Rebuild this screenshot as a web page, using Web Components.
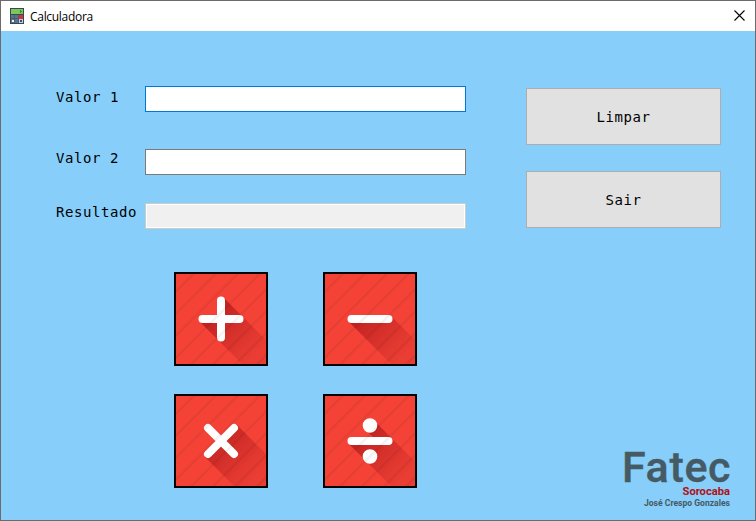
<!DOCTYPE html>
<html lang="pt-BR">
<head>
<meta charset="utf-8">
<title>Calculadora</title>
<style>
html,body{margin:0;height:100%;overflow:hidden}
</style>
</head>
<body>
<calc-window caption="Calculadora">
  <calc-fields>
    <calc-field label="Valor 1" state="focus" style="--h:63px;--shift:-2px"></calc-field>
    <calc-field label="Valor 2" style="--h:54px;--shift:-4px"></calc-field>
    <calc-field label="Resultado" state="readonly" style="--h:26px;--shift:-4px"></calc-field>
  </calc-fields>
  <calc-pad>
    <op-tile op="plus"></op-tile>
    <op-tile op="minus"></op-tile>
    <op-tile op="times"></op-tile>
    <op-tile op="divide"></op-tile>
  </calc-pad>
  <push-button slot="side">Limpar</push-button>
  <push-button slot="side">Sair</push-button>
  <fatec-logo slot="side"></fatec-logo>
</calc-window>
<script>
function define(name, render) {
  customElements.define(name, class extends HTMLElement {
    constructor() {
      super();
      this.attachShadow({ mode: 'open' });
    }
    connectedCallback() {
      this.shadowRoot.innerHTML = render(this);
    }
  });
}

define('calc-window', el => `
<style>
:host{display:flex;flex-direction:column;box-sizing:border-box;width:756px;height:521px;border:1px solid #6b6b6b;background:#87cefa;color:#000;font:14px "DejaVu Sans Mono",monospace;letter-spacing:.57px}
header{display:flex;align-items:center;box-sizing:border-box;height:30px;background:#fff;padding:0 10px 0 9px;font:12px "Open Sans","Noto Sans",sans-serif}
header span{margin:0 0 0 6px;flex:1;letter-spacing:-.3px}
header svg:first-child{margin-top:-1px}
header svg:last-child{margin-top:-1px}
svg{display:block}
main{flex:1;display:flex;min-height:0}
.left{width:525px;box-sizing:border-box;padding:55px 0 0 55px}
.side{flex:1;display:flex;flex-direction:column;gap:26px;padding:57px 34px 9px 0}
</style>
<header>
  <svg width="14" height="16" viewBox="0 0 14 16" shape-rendering="crispEdges">
    <rect width="14" height="16" fill="#2f4a58"/>
    <rect x="1" y="1" width="12" height="5" fill="#7dc855"/>
    <path d="M10 2h1v1h1v1h-1v1h-1" fill="#3f8a3a"/>
    <path d="M1 7h12v8H1z" fill="#5b7385"/>
    <path d="M4 7h1v8H4zM8 7h1v8H8zM1 10h8v1H1z" fill="#465e6f"/>
    <rect x="9" y="7" width="4" height="4" fill="#e02a40"/>
    <path d="M2 12h2v2H2z" fill="#eef3f5"/>
    <path d="M9 11h4v4H9z" fill="#b9d3e6"/><path d="M10 12h2v2h-2z" fill="#3b5263"/>
  </svg>
  <span>${el.getAttribute('caption')}</span>
  <svg width="11" height="11" viewBox="0 0 11 11"><path d="M.5 .5l10 10M10.500 .5l-10 10" stroke="#000" stroke-width="1.1"/></svg>
</header>
<main><div class="left"><slot></slot></div><div class="side"><slot name="side"></slot></div></main>`);

define('calc-fields', () => `
<style>:host{display:flex;flex-direction:column;height:143px}</style><slot></slot>`);

define('calc-field', el => `
<style>
:host{display:grid;grid-template-columns:89px 321px;height:var(--h);align-items:start}
label{line-height:26px;margin-top:var(--shift);white-space:pre}
div{box-sizing:border-box;height:26px;background:#fff;border:1px solid #7a7a7a}
:host([state=focus]) div{border-color:#0078d7}
:host([state=readonly]) div{border-color:#ccc;background:#f0f0f0;box-shadow:inset 0 0 0 1px #fff}
</style>
<label>${el.getAttribute('label')}</label><div></div>`);

define('calc-pad', () => `
<style>:host{display:grid;grid-template-columns:94px 94px;gap:28px 55px;margin:43px 0 0 118px}</style><slot></slot>`);

const ops = {
  plus: {
    shade: 'M24 48L45 45L48 24L90 66V90H66Z',
    glyph: '<path d="M26.500 45h37M45 26.500v37"/>'
  },
  minus: {
    shade: 'M24 48L26 45L66 42L90 66V90H66Z',
    glyph: '<path d="M26.500 45h37"/>'
  },
  times: {
    shade: 'M29 61L61 29L90 58V90H58Z',
    glyph: '<path d="M32 32l26 26M58 32l-26 26"/>'
  },
  divide: {
    shade: 'M41 34L49.500 25L90 65.500V90H66L24 48L26 45H52Z',
    glyph: '<path d="M26.500 45h37"/><circle cx="45" cy="29.500" r="3.300"/><circle cx="45" cy="60.500" r="3.300"/>'
  }
};
define('op-tile', el => {
  const o = ops[el.getAttribute('op')];
  let lines = '';
  for (let s = 17.5; s < 180; s += 22) lines += `M${s + 4} -4L-4 ${s + 4}`;
  return `
<style>:host{display:block;box-sizing:border-box;width:94px;height:94px;border:2px solid #000}svg{display:block}</style>
<svg width="90" height="90" viewBox="0 0 90 90">
  <defs><linearGradient id="g" gradientUnits="userSpaceOnUse" x1="36" y1="36" x2="80" y2="80">
    <stop offset="0" stop-color="#b71c1c" stop-opacity=".9"/><stop offset="1" stop-color="#c62828" stop-opacity=".22"/>
  </linearGradient></defs>
  <rect width="90" height="90" fill="#f44336"/>
  <path d="${o.shade}" fill="url(#g)"/>
  <g fill="#fff" stroke="#fff" stroke-width="8" stroke-linecap="round">${o.glyph}</g>
  <path d="${lines}" fill="none" stroke="#000" stroke-opacity=".05" stroke-width="2.6"/>
</svg>`;
});

define('push-button', () => `
<style>:host{display:flex;align-items:center;justify-content:center;box-sizing:border-box;height:57px;padding-top:1px;background:#e1e1e1;border:1px solid #adadad}</style><slot></slot>`);

define('fatec-logo', () => `
<style>
:host{display:flex;justify-content:flex-end;margin:auto -12px 0 0}
svg{display:block;overflow:visible}
text{font-family:Roboto,sans-serif;letter-spacing:0}
</style>
<svg width="114" height="72" viewBox="619 440 114 72">
  <text x="622" y="483" font-size="43" font-weight="500" fill="#455a64" stroke="#455a64" stroke-width=".4" textLength="108.500" lengthAdjust="spacing">Fatec</text>
  <text x="682.500" y="496" font-size="10.500" font-weight="700" fill="#b01116" textLength="47.500" lengthAdjust="spacingAndGlyphs">Sorocaba</text>
  <text x="644" y="507" font-size="8.800" font-weight="700" fill="#455a64" textLength="86" lengthAdjust="spacingAndGlyphs">José Crespo Gonzales</text>
</svg>`);
</script>
</body>
</html>
